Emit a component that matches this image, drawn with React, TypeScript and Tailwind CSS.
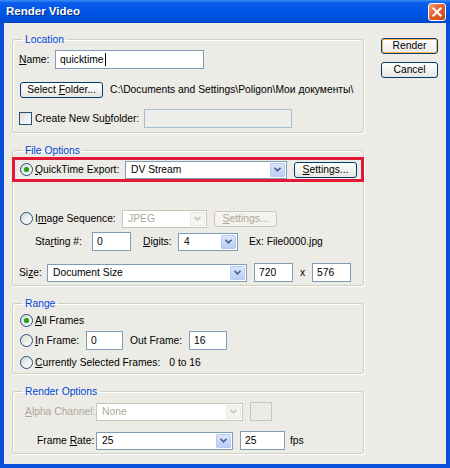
import React from 'react';

const font = { fontFamily: '"Liberation Sans", Arial, sans-serif' };

function U({ children }: { children: React.ReactNode }) {
  return <span className="underline underline-offset-[1px]">{children}</span>;
}

function Radio({ checked }: { checked?: boolean }) {
  return (
    <span className="flex h-[13px] w-[13px] shrink-0 items-center justify-center rounded-full border border-[#1C5180] bg-[linear-gradient(135deg,#DCDCD7,#FFFFFF)]">
      {checked && <span className="h-[5px] w-[5px] rounded-full bg-[#21A121] shadow-[0_0_1px_#5FD35F]" />}
    </span>
  );
}

function Chevron({ disabled }: { disabled?: boolean }) {
  return (
    <svg width="7" height="5" viewBox="0 0 7 5">
      <path d="M0.5 0.8 L3.5 3.8 L6.5 0.8" fill="none" stroke={disabled ? '#C9C7BA' : '#4D6185'} strokeWidth="1.6" />
    </svg>
  );
}

function Combo({ w, value, disabled }: { w: string; value: string; disabled?: boolean }) {
  return (
    <div
      className={`flex h-[18px] shrink-0 items-center border p-px ${w} ${
        disabled ? 'border-[#C9C7BA] bg-white text-[#ACA899]' : 'border-[#7F9DB9] bg-white text-black'
      }`}
    >
      <span className="flex-1 truncate pl-[4px] leading-[14px]">{value}</span>
      <span
        className={`flex h-full w-[15px] items-center justify-center rounded-[1px] border ${
          disabled ? 'border-[#E8E8E0] bg-[#F4F4F0]' : 'border-[#B7CAF5] bg-[linear-gradient(180deg,#DCE6FC,#B9CDF7)]'
        }`}
      >
        <Chevron disabled={disabled} />
      </span>
    </div>
  );
}

function TextBox({ w, value, disabled }: { w: string; value?: string; disabled?: boolean }) {
  return (
    <div
      className={`flex h-[19px] shrink-0 items-center border pl-[4px] ${w} ${
        disabled ? 'border-[#A8BCD2] bg-[#EDEDEA]' : 'border-[#7F9DB9] bg-white'
      }`}
    >
      {value}
    </div>
  );
}

function Btn({
  w,
  children,
  disabled,
  isDefault,
}: {
  w: string;
  children: React.ReactNode;
  disabled?: boolean;
  isDefault?: boolean;
}) {
  return (
    <div
      className={`flex h-[16px] shrink-0 items-center justify-center rounded-[3px] border leading-[12px] ${w} ${
        disabled
          ? 'border-[#C9C7BA] bg-[#F4F3EE] text-[#ACA899]'
          : isDefault
          ? 'border-[#003C74] bg-[linear-gradient(180deg,#FFFFFF,#ECEBE6)] text-black shadow-[inset_0_0_0_1px_#F8B84A]'
          : 'border-[#003C74] bg-[linear-gradient(180deg,#FFFFFF,#E6E5DE)] text-black'
      }`}
    >
      <span>{children}</span>
    </div>
  );
}

function Group({ title, children, className = '' }: { title: string; children: React.ReactNode; className?: string }) {
  return (
    <fieldset
      className={`w-[352px] rounded-[3px] border border-[#D0D0BF] shadow-[inset_1px_1px_0_#FFFFFF,1px_1px_0_#FFFFFF] ${className}`}
    >
      <legend className="ml-[9px] px-[3px] leading-[13px] text-[#0046D5]">{title}</legend>
      {children}
    </fieldset>
  );
}

export default function App() {
  return (
    <div
      className="flex h-[468px] w-[450px] flex-col whitespace-nowrap bg-[#0A50DA] text-[10.3px] text-black"
      style={font}
    >
      {/* Title bar */}
      <div className="flex h-[23px] shrink-0 items-center justify-between bg-[linear-gradient(180deg,#3D8DF5_0%,#0A5EEA_12%,#0055E5_50%,#0050DD_85%,#0046C8_100%)] pl-[6px] pr-[4px]">
        <span className="text-[11.5px] font-bold text-white [text-shadow:1px_1px_0_#0A2A7A]">Render Video</span>
        <span className="flex h-[18px] w-[18px] items-center justify-center rounded-[3px] border border-white bg-[linear-gradient(135deg,#F0A27F,#E2602E_45%,#C94518)]">
          <svg width="10" height="10" viewBox="0 0 10 10">
            <path d="M1.5 1.5 L8.5 8.5 M8.5 1.5 L1.5 8.5" stroke="white" strokeWidth="2.2" strokeLinecap="square" />
          </svg>
        </span>
      </div>

      {/* Client area */}
      <div className="mx-[4px] mb-[4px] flex flex-1 bg-[#ECEBE6]">
        <div className="flex flex-col pl-[8px]">
          {/* Location */}
          <Group title="Location" className="mt-[10px] pb-[4px] pt-[4px]">
            <div className="flex h-[19px] items-center pl-[6px]">
              <span className="w-[36px] shrink-0">
                <U>N</U>ame:
              </span>
              <div className="flex h-[19px] w-[149px] items-center border border-[#7F9DB9] bg-white pl-[4px]">
                <span>quicktime</span>
                <span className="ml-px h-[13px] w-px bg-black" />
              </div>
            </div>
            <div className="mt-[11px] flex h-[19px] items-center pl-[7px]">
              <Btn w="w-[83px]">
                Select <U>F</U>older...
              </Btn>
              <span className="ml-[7px]">C:\Documents and Settings\Poligon\Мои документы\</span>
            </div>
            <div className="mt-[10px] flex h-[19px] items-center pl-[6px]">
              <span className="h-[13px] w-[13px] shrink-0 border border-[#1C5180] bg-[linear-gradient(135deg,#DCDCD7,#FFFFFF)]" />
              <span className="w-[112px] shrink-0 pl-[3px]">
                Create New Su<U>b</U>folder:
              </span>
              <TextBox w="w-[148px]" disabled />
            </div>
          </Group>

          {/* File Options */}
          <Group title="File Options" className="mt-[11px] pb-[3px]">
            <div className="-mx-px flex h-[25px] items-center border-[3px] border-[#E31837] pl-[5px]">
              <Radio checked />
              <span className="w-[92px] shrink-0 pl-[2px]">
                <U>Q</U>uickTime Export:
              </span>
              <Combo w="w-[162px]" value="DV Stream" />
              <span className="ml-[7px]">
                <Btn w="w-[63px]">
                  <U>S</U>ettings...
                </Btn>
              </span>
            </div>
            <div className="mt-[27px] flex h-[19px] items-center pl-[7px]">
              <Radio />
              <span className="w-[89px] shrink-0 pl-[2px]">
                I<U>m</U>age Sequence:
              </span>
              <Combo w="w-[85px]" value="JPEG" disabled />
              <span className="ml-[7px]">
                <Btn w="w-[63px]" disabled>
                  <U>S</U>ettings...
                </Btn>
              </span>
            </div>
            <div className="mt-[4px] flex h-[19px] items-center pl-[22px]">
              <span className="w-[57px] shrink-0">
                Sta<U>r</U>ting #:
              </span>
              <TextBox w="w-[39px]" value="0" />
              <span className="ml-[12px] w-[35px] shrink-0">
                <U>D</U>igits:
              </span>
              <Combo w="w-[60px]" value="4" />
              <span className="ml-[11px]">Ex: File0000.jpg</span>
            </div>
            <div className="mt-[12px] flex h-[19px] items-center pl-[6px]">
              <span className="w-[28px] shrink-0">
                Si<U>z</U>e:
              </span>
              <Combo w="w-[200px]" value="Document Size" />
              <span className="ml-[7px]">
                <TextBox w="w-[39px]" value="720" />
              </span>
              <span className="w-[19px] shrink-0 text-center">x</span>
              <TextBox w="w-[39px]" value="576" />
            </div>
          </Group>

          {/* Range */}
          <Group title="Range" className="mt-[11px] pb-px pt-px">
            <div className="flex h-[19px] items-center pl-[7px]">
              <Radio checked />
              <span className="pl-[2px]">
                <U>A</U>ll Frames
              </span>
            </div>
            <div className="mt-px flex h-[19px] items-center pl-[7px]">
              <Radio />
              <span className="w-[53px] shrink-0 pl-[2px]">
                <U>I</U>n Frame:
              </span>
              <TextBox w="w-[37px]" value="0" />
              <span className="ml-[7px] w-[59px] shrink-0">Out Frame:</span>
              <TextBox w="w-[38px]" value="16" />
            </div>
            <div className="mt-[3px] flex h-[19px] items-center pl-[7px]">
              <Radio />
              <span className="shrink-0 pl-[2px]">
                <U>C</U>urrently Selected Frames:
              </span>
              <span className="ml-[9px]">0 to 16</span>
            </div>
          </Group>

          {/* Render Options */}
          <Group title="Render Options" className="mt-[11px] pb-[3px] pt-[4px]">
            <div className="flex h-[19px] items-center pl-[12px]">
              <span className="w-[71px] shrink-0 text-[#ACA899]">
                <U>A</U>lpha Channel:
              </span>
              <Combo w="w-[147px]" value="None" disabled />
              <span className="ml-[7px] h-[19px] w-[22px] shrink-0 border border-[#C9C7BA]" />
            </div>
            <div className="mt-[10px] flex h-[19px] items-center pl-[24px]">
              <span className="w-[59px] shrink-0">
                Frame <U>R</U>ate:
              </span>
              <Combo w="w-[137px]" value="25" />
              <span className="ml-[7px]">
                <TextBox w="w-[45px]" value="25" />
              </span>
              <span className="ml-[5px]">fps</span>
            </div>
          </Group>
        </div>

        {/* Buttons */}
        <div className="ml-[17px] flex flex-col gap-[8px] pt-[15px]">
          <Btn w="w-[57px]" isDefault>
            Render
          </Btn>
          <Btn w="w-[57px]">Cancel</Btn>
        </div>
      </div>
    </div>
  );
}
